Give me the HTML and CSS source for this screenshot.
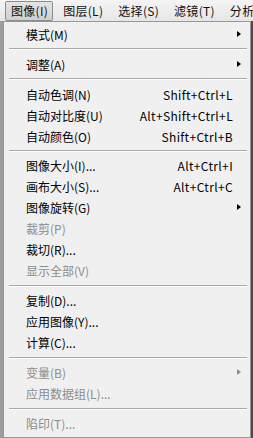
FILE: index.html
```html
<!DOCTYPE html>
<html lang="zh-CN">
<head>
<meta charset="utf-8">
<link rel="stylesheet" href="styles.css">
</head>
<body>
<div class="menubar">
  <span class="mb-item active">图像(I)</span>
  <span class="mb-item">图层(L)</span>
  <span class="mb-item">选择(S)</span>
  <span class="mb-item">滤镜(T)</span>
  <span class="mb-item">分析</span>
</div>
<div class="stage">
  <div class="menu">
    <div class="item"><span class="label">模式(M)</span><span class="arrow"></span></div>
    <div class="sep"></div>
    <div class="item"><span class="label">调整(A)</span><span class="arrow"></span></div>
    <div class="sep"></div>
    <div class="item"><span class="label">自动色调(N)</span><span class="key">Shift+Ctrl+L</span></div>
    <div class="item"><span class="label">自动对比度(U)</span><span class="key">Alt+Shift+Ctrl+L</span></div>
    <div class="item"><span class="label">自动颜色(O)</span><span class="key">Shift+Ctrl+B</span></div>
    <div class="sep"></div>
    <div class="item"><span class="label">图像大小(I)...</span><span class="key">Alt+Ctrl+I</span></div>
    <div class="item"><span class="label">画布大小(S)...</span><span class="key">Alt+Ctrl+C</span></div>
    <div class="item"><span class="label">图像旋转(G)</span><span class="arrow"></span></div>
    <div class="item disabled"><span class="label">裁剪(P)</span></div>
    <div class="item"><span class="label">裁切(R)...</span></div>
    <div class="item disabled"><span class="label">显示全部(V)</span></div>
    <div class="sep"></div>
    <div class="item"><span class="label">复制(D)...</span></div>
    <div class="item"><span class="label">应用图像(Y)...</span></div>
    <div class="item"><span class="label">计算(C)...</span></div>
    <div class="sep"></div>
    <div class="item disabled"><span class="label">变量(B)</span><span class="arrow"></span></div>
    <div class="item disabled"><span class="label">应用数据组(L)...</span></div>
    <div class="sep"></div>
    <div class="item disabled"><span class="label">陷印(T)...</span></div>
  </div>
</div>
</body>
</html>
```

FILE: styles.css
```css
html, body {
  margin: 0;
  padding: 0;
}
body {
  width: 253px;
  height: 438px;
  overflow: hidden;
  background: #a8a8a8;
  font-family: "Noto Sans CJK SC", "Noto Sans", sans-serif;
  font-size: 12px;
  color: #000;
}
.menubar {
  height: 21px;
  display: flex;
  align-items: center;
  padding-left: 5px;
  gap: 4px;
  background: linear-gradient(#f4f4f4, #e6e6e6);
  white-space: nowrap;
  overflow: hidden;
}
.mb-item {
  height: 18px;
  line-height: 18px;
  padding: 0 4px 0 5px;
  border: 1px solid transparent;
  border-radius: 2px;
  color: #111;
  letter-spacing: 0.3px;
}
.mb-item.active {
  border-color: #8c8c8c;
  background: linear-gradient(#e4e4e4, #cfcfcf);
}
.stage {
  display: flex;
  padding-left: 3px;
  background: linear-gradient(90deg, #9c9c9c, #c4c4c4);
  height: 417px;
}
.menu {
  width: 246px;
  border: 1px solid #979797;
  background: #f0f0f0;
  padding: 2px 0 3px;
  box-shadow: 2px 0 0 #4a4a4a;
  display: flex;
  flex-direction: column;
}
.item {
  height: 21px;
  display: flex;
  align-items: center;
  padding-left: 22px;
  padding-right: 17px;
  position: relative;
}
.label {
  flex: 1;
  line-height: 21px;
}
.key {
  line-height: 21px;
  letter-spacing: 0.35px;
}
.arrow {
  position: absolute;
  right: 9px;
  top: 7px;
  width: 0;
  height: 0;
  border-top: 3.5px solid transparent;
  border-bottom: 3.5px solid transparent;
  border-left: 4px solid #000;
}
.disabled {
  color: #8d8d8d;
}
.disabled .arrow {
  border-left-color: #8d8d8d;
}
.sep {
  height: 9px;
  display: flex;
  flex-direction: column;
  justify-content: center;
  padding: 0 3px 0 5px;
}
.sep::before {
  content: "";
  display: block;
  height: 1px;
  background: #a9a9a9;
}
.sep::after {
  content: "";
  display: block;
  height: 1px;
  background: #ffffff;
}
```
